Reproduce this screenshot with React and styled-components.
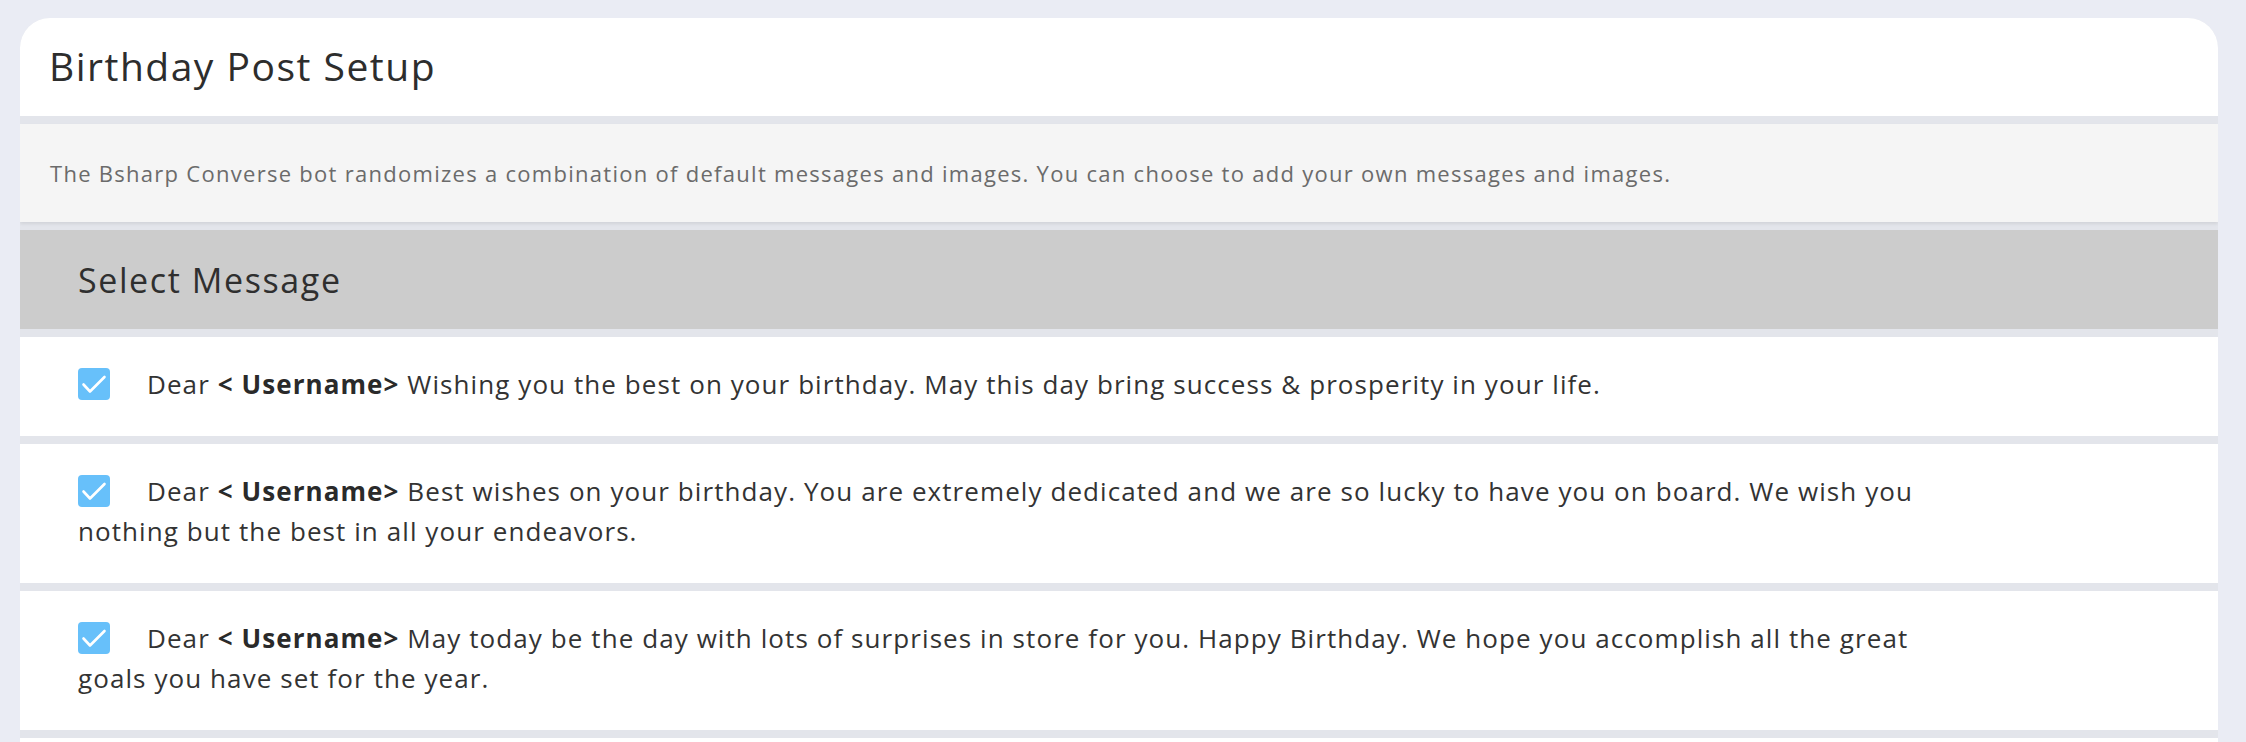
import React from "react";
import styled, { createGlobalStyle } from "styled-components";

const GlobalStyle = createGlobalStyle`
  html, body {
    margin: 0;
    padding: 0;
    background: #eaecf4;
  }
  * {
    box-sizing: border-box;
  }
`;

const Page = styled.div`
  padding: 18px 28px 0 20px;
  font-family: "Open Sans", "Noto Sans", sans-serif;
`;

const Card = styled.div`
  display: flex;
  flex-direction: column;
  gap: 8px;
  background: #e3e5eb;
  border-radius: 30px 30px 0 0;
  overflow: hidden;
`;

const Header = styled.div`
  height: 98px;
  padding: 0 29px 4px;
  display: flex;
  align-items: center;
  background: #ffffff;
`;

const Title = styled.h1`
  margin: 0;
  font-size: 39px;
  font-weight: 400;
  letter-spacing: 1.5px;
  color: #2d2d2d;
`;

const Notice = styled.div`
  height: 98px;
  padding: 0 30px;
  display: flex;
  align-items: center;
  background: #f5f5f5;
  box-shadow: 0 2px 3px rgba(0, 0, 0, 0.08);
  font-size: 22px;
  letter-spacing: 1.28px;
  color: #6b6b6b;
`;

const SectionBar = styled.div`
  height: 99px;
  padding: 0 58px;
  display: flex;
  align-items: center;
  background: #cccccc;
  font-size: 34px;
  letter-spacing: 1.6px;
  color: #2f2f2f;
`;

const Row = styled.div`
  padding: 27px 58px 32px;
  background: #ffffff;
`;

const Text = styled.p`
  margin: 0;
  max-width: 1872px;
  font-size: 26px;
  line-height: 40px;
  letter-spacing: 1.08px;
  color: #333333;
`;

const Strong = styled.b`
  font-weight: 700;
  color: #2a2a2a;
`;

const Box = styled.span`
  display: inline-block;
  width: 32px;
  height: 32px;
  margin-right: 37px;
  vertical-align: -6px;
  border-radius: 4px;
  background: #67c0fa;

  svg {
    display: block;
  }
`;

const Checkbox = () => (
  <Box>
    <svg width="32" height="32" viewBox="0 0 32 32" fill="none">
      <path
        d="M5.5 16.5 L12 23.5 L26.5 9"
        stroke="#ffffff"
        strokeWidth="2.6"
        strokeLinecap="round"
        strokeLinejoin="round"
      />
    </svg>
  </Box>
);

const messages = [
  "Wishing you the best on your birthday. May this day bring success & prosperity in your life.",
  "Best wishes on your birthday. You are extremely dedicated and we are so lucky to have you on board. We wish you nothing but the best in all your endeavors.",
  "May today be the day with lots of surprises in store for you. Happy Birthday. We hope you accomplish all the great goals you have set for the year.",
  "Happy Birthday! Thank you for all the hard work and energy you bring to the team every day.",
];

export default function App() {
  return (
    <Page>
      <GlobalStyle />
      <Card>
        <Header>
          <Title>Birthday Post Setup</Title>
        </Header>
        <Notice>
          The Bsharp Converse bot randomizes a combination of default messages
          and images. You can choose to add your own messages and images.
        </Notice>
        <SectionBar>Select Message</SectionBar>
        {messages.map((msg) => (
          <Row key={msg}>
            <Text>
              <Checkbox />
              Dear <Strong>&lt; Username&gt;</Strong> {msg}
            </Text>
          </Row>
        ))}
      </Card>
    </Page>
  );
}
